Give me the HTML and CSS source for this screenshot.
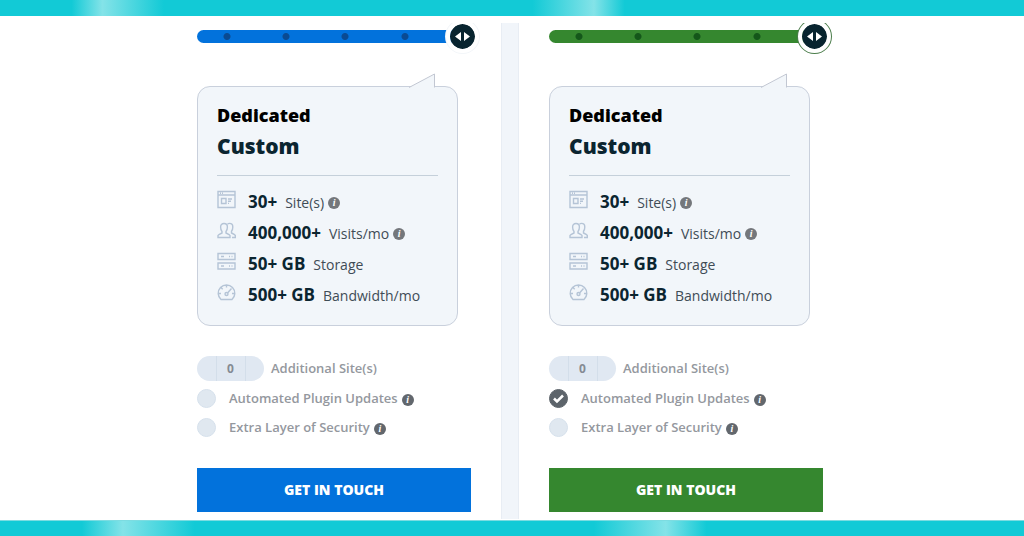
FILE: index.html
```html
<!DOCTYPE html>
<html lang="en">
<head>
    <meta charset="UTF-8">
    <meta name="viewport" content="width=device-width, initial-scale=1.0">
    <title>Dedicated Plans</title>
    <link rel="stylesheet" href="styles.css">
</head>
<body>
    <svg class="sprite" aria-hidden="true">
        <symbol id="icon-site" viewBox="0 0 19 19">
            <path d="M1 1.5h17v16H1zM1 5h17M3 3.3h1M5 3.3h1M4.5 8.5h4.5v5H4.5zM11 9h4M11 11.2h3M11 13.4h1"/>
        </symbol>
        <symbol id="icon-visits" viewBox="0 0 19 19">
            <path d="M1 16.5v-2l1-1 3-1.5v-1.5C3.8 9.200 3.600 8 3.600 6 3.600 3.800 4.800 2.500 7 2.500s3.400 1.300 3.400 3.500c0 2-.2 3.200-1.400 4.500V12l3 1.500 1 1v2zM10.500 3c.6-.4 1.200-.6 2-.6 2.200 0 3.300 1.400 3.300 3.500 0 2-.3 3.200-1.300 4.400V12l3 1.500.8 1v2H15"/>
        </symbol>
        <symbol id="icon-storage" viewBox="0 0 19 19">
            <path d="M1 1.500h17v6H1zM1 11h17v6H1zM4 4.500h3M4 14h3M12 4.500h1M14.500 4.500h1M12 14h1M14.500 14h1"/>
        </symbol>
        <symbol id="icon-bandwidth" viewBox="0 0 19 19">
            <path d="M4 16.500a8.300 8.300 0 1 1 11 0zM9.500 2v2.500M4.200 4.800l1.500 1.500M1.500 10.500h2.500M15 10.500h2.500M10.500 10l4-4.500"/>
            <circle cx="9.500" cy="11" r="1.500"/>
        </symbol>
    </svg>

    <div class="band band-top"></div>

    <main class="plans">
        <section class="plan plan-blue">
            <input class="slider" type="range" min="0" max="4" value="4" aria-label="Plan size">
            <div class="card">
                <svg class="pointer" viewBox="0 0 27 15" aria-hidden="true"><path d="M0 14.500 25.500 1v13.500"/></svg>
                <h2>Dedicated</h2>
                <h3>Custom</h3>
                <ul class="features">
                    <li><svg><use href="#icon-site"/></svg><strong>30+</strong><span>Site(s)</span><i class="info">i</i></li>
                    <li><svg><use href="#icon-visits"/></svg><strong>400,000+</strong><span>Visits/mo</span><i class="info">i</i></li>
                    <li><svg><use href="#icon-storage"/></svg><strong>50+ GB</strong><span>Storage</span></li>
                    <li><svg><use href="#icon-bandwidth"/></svg><strong>500+ GB</strong><span>Bandwidth/mo</span></li>
                </ul>
            </div>
            <div class="options">
                <div class="option">
                    <div class="stepper">
                        <button type="button" aria-label="Remove site"></button>
                        <input type="text" inputmode="numeric" id="sites-blue" value="0">
                        <button type="button" aria-label="Add site"></button>
                    </div>
                    <label for="sites-blue">Additional Site(s)</label>
                </div>
                <div class="option option-check">
                    <input type="checkbox" id="updates-blue">
                    <label for="updates-blue">Automated Plugin Updates</label><i class="info info-dark">i</i>
                </div>
                <div class="option option-check">
                    <input type="checkbox" id="security-blue">
                    <label for="security-blue">Extra Layer of Security</label><i class="info info-dark">i</i>
                </div>
            </div>
            <button class="cta" type="button">GET IN TOUCH</button>
        </section>

        <div class="divider"></div>

        <section class="plan plan-green">
            <input class="slider" type="range" min="0" max="4" value="4" aria-label="Plan size">
            <div class="card">
                <svg class="pointer" viewBox="0 0 27 15" aria-hidden="true"><path d="M0 14.500 25.500 1v13.500"/></svg>
                <h2>Dedicated</h2>
                <h3>Custom</h3>
                <ul class="features">
                    <li><svg><use href="#icon-site"/></svg><strong>30+</strong><span>Site(s)</span><i class="info">i</i></li>
                    <li><svg><use href="#icon-visits"/></svg><strong>400,000+</strong><span>Visits/mo</span><i class="info">i</i></li>
                    <li><svg><use href="#icon-storage"/></svg><strong>50+ GB</strong><span>Storage</span></li>
                    <li><svg><use href="#icon-bandwidth"/></svg><strong>500+ GB</strong><span>Bandwidth/mo</span></li>
                </ul>
            </div>
            <div class="options">
                <div class="option">
                    <div class="stepper">
                        <button type="button" aria-label="Remove site"></button>
                        <input type="text" inputmode="numeric" id="sites-green" value="0">
                        <button type="button" aria-label="Add site"></button>
                    </div>
                    <label for="sites-green">Additional Site(s)</label>
                </div>
                <div class="option option-check">
                    <input type="checkbox" id="updates-green" checked>
                    <label for="updates-green">Automated Plugin Updates</label><i class="info info-dark">i</i>
                </div>
                <div class="option option-check">
                    <input type="checkbox" id="security-green">
                    <label for="security-green">Extra Layer of Security</label><i class="info info-dark">i</i>
                </div>
            </div>
            <button class="cta" type="button">GET IN TOUCH</button>
        </section>
    </main>

    <div class="band band-bottom"></div>
</body>
</html>
```

FILE: styles.css
```css
* {
    box-sizing: border-box;
}
body {
    display: flex;
    flex-direction: column;
    min-height: 100vh;
    margin: 0;
    background-color: #fff;
    color: #0b2530;
    font-family: "Open Sans", "Noto Sans", sans-serif;
}
.sprite {
    display: none;
}

/* Bands */
.band {
    height: 16px;
    flex-shrink: 0;
}
.band-top {
    background: linear-gradient(90deg, #12cad6 7%, #84e3e8 10%, #12cad6 16%, #12cad6 52%, #84e3e8 58%, #12cad6 61%);
}
.band-bottom {
    border-top: 1px solid #7cdce1;
    background: linear-gradient(90deg, #12cad6 8%, #84e3e8 12%, #12cad6 19%, #12cad6 58%, #84e3e8 65%, #12cad6 69%);
}

/* Plans */
.plans {
    display: flex;
    flex: 1;
    justify-content: center;
    gap: 30px;
    margin: 7px 0 1px;
    padding-right: 4px;
    overflow: hidden;
}
.divider {
    width: 18px;
    border: 1px solid #e8edf4;
    border-width: 0 1px;
    background-color: #f1f5fa;
}
.plan {
    display: flex;
    flex-direction: column;
    width: 274px;
    padding-bottom: 7px;
}
.plan-blue {
    --main: #0272dc;
    --dot: #0a4a92;
    --ring: #f3f6f9;
}
.plan-green {
    --main: #35872f;
    --dot: #14571a;
    --ring: #4b7d4b;
}

/* Slider */
.slider {
    appearance: none;
    width: 282px;
    height: 27px;
    margin: 0 -8px 36px 0;
    background: none;
}
.slider::-webkit-slider-runnable-track {
    height: 13px;
    border-radius: 7px 0 0 7px;
    background:
        radial-gradient(circle at 30px 50%, var(--dot) 3px, transparent 4px),
        radial-gradient(circle at 89px 50%, var(--dot) 3px, transparent 4px),
        radial-gradient(circle at 148px 50%, var(--dot) 3px, transparent 4px),
        radial-gradient(circle at 208px 50%, var(--dot) 3px, transparent 4px),
        linear-gradient(90deg, var(--main) 265px, transparent 265px);
}
.slider::-webkit-slider-thumb {
    appearance: none;
    width: 33px;
    height: 33px;
    margin-top: -10px;
    border: 4px solid #fff;
    border-radius: 50%;
    background: #08242f url("data:image/svg+xml,%3Csvg xmlns='http://www.w3.org/2000/svg' viewBox='0 0 25 25'%3E%3Cpath fill='%23fff' d='M11 8v9L5 12.500zM14 8v9l6-4.500z'/%3E%3C/svg%3E") center / 25px 25px no-repeat;
    background-clip: padding-box;
    box-shadow: 0 0 0 1px var(--ring);
}

/* Card */
.card {
    position: relative;
    width: 261px;
    height: 240px;
    padding: 16px 19px;
    border: 1px solid #c9d0dc;
    border-radius: 13px;
    background-color: #f2f6fa;
}
.pointer {
    position: absolute;
    top: -14px;
    right: 21px;
    width: 27px;
    height: 15px;
    fill: #f2f6fa;
    stroke: #c2c7d2;
}
.card h2 {
    margin: 0;
    color: #000;
    font-size: 18px;
    font-weight: 800;
    line-height: 24px;
}
.card h3 {
    margin: 4px 0 0;
    padding-bottom: 14px;
    border-bottom: 1px solid #c5d0da;
    font-size: 21px;
    font-weight: 800;
    line-height: 30px;
}
.features {
    margin: 0;
    padding: 10px 0 0;
    list-style: none;
}
.features li {
    display: flex;
    align-items: baseline;
    height: 31px;
    line-height: 31px;
    white-space: nowrap;
}
.features svg {
    align-self: flex-start;
    width: 19px;
    height: 19px;
    margin: 4px 12px 0 0;
    fill: none;
    stroke: #b5c4d6;
    stroke-width: 1.4;
}
.features strong {
    margin-right: 8px;
    font-size: 17px;
    font-weight: 700;
}
.features span {
    color: #3f4c56;
    font-size: 14px;
}
.info {
    width: 12px;
    height: 12px;
    margin-left: 4px;
    border-radius: 50%;
    background-color: #74777b;
    color: #fff;
    font: italic bold 10px/12px "Liberation Serif", serif;
    text-align: center;
}
.features .info {
    align-self: center;
    margin-top: 3px;
}
.info-dark {
    margin-top: 2px;
    background-color: #62676d;
}

/* Options */
.options {
    display: flex;
    flex-direction: column;
    margin: 30px 0 26px;
    color: #94989e;
    font-size: 13px;
    font-weight: 600;
}
.option {
    display: flex;
    align-items: center;
    height: 25px;
    margin-bottom: 3px;
}
.option label {
    padding-bottom: 1px;
}
.option-check {
    height: 29px;
    margin: 0;
}
.stepper {
    display: flex;
    width: 67px;
    height: 25px;
    margin-right: 7px;
    overflow: hidden;
    border-radius: 13px;
    background-color: #e0e8f2;
}
.stepper button {
    flex: 1;
    padding: 0;
    border: none;
    background: none;
}
.stepper input {
    width: 30px;
    padding: 0;
    border: 1px solid #d3deea;
    border-width: 0 1px;
    background: none;
    color: #858b93;
    font: 700 12px "Open Sans", sans-serif;
    text-align: center;
}
.option-check input {
    appearance: none;
    width: 19px;
    height: 19px;
    margin: 0 13px 0 0;
    border: 1px solid #d6e1ec;
    border-radius: 50%;
    background-color: #e0e8f0;
}
.option-check input:checked {
    border-color: #5d646b;
    background: #5d646b url("data:image/svg+xml,%3Csvg xmlns='http://www.w3.org/2000/svg' viewBox='0 0 17 17'%3E%3Cpath fill='none' stroke='%23fff' stroke-width='2.500' d='M4 8.500l3 3 6-6'/%3E%3C/svg%3E") center no-repeat;
}

/* Button */
.cta {
    height: 44px;
    padding: 0 0 2px;
    border: none;
    background-color: var(--main);
    color: #fff;
    font: 800 14px "Open Sans", sans-serif;
    cursor: pointer;
}
```
